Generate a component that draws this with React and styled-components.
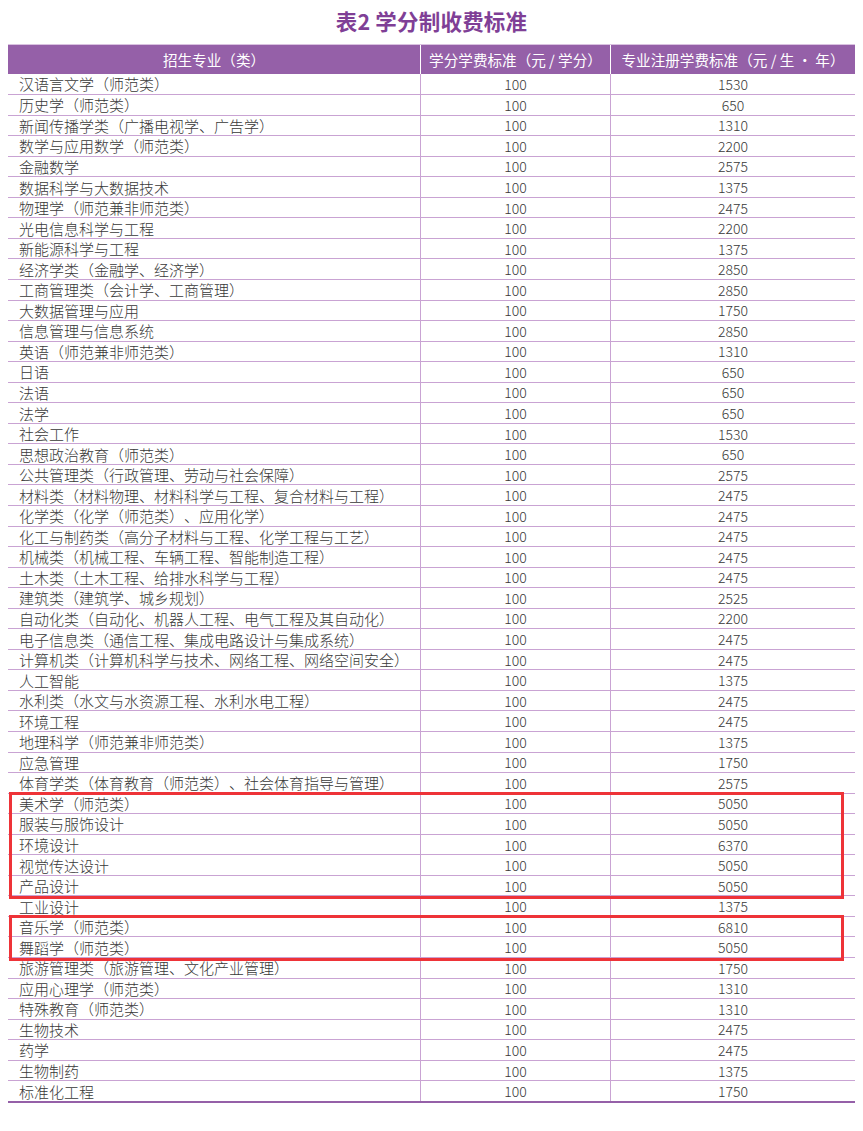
import React from "react";
import styled, { createGlobalStyle } from "styled-components";

const Global = createGlobalStyle`
  html, body { margin: 0; padding: 0; background: #fff; }
  body {
    font-family: "Noto Sans CJK SC", "Noto Sans", sans-serif;
    text-spacing-trim: space-all;
  }
`;

const Page = styled.div`
  width: 863px;
  padding: 6px 8px 0 8px;
  box-sizing: border-box;
`;

const Title = styled.h1`
  margin: 0;
  height: 38px;
  font-size: 21.5px;
  line-height: 30px;
  font-weight: 700;
  color: #7f3f96;
  text-align: center;
  letter-spacing: 0.2px;
`;

const Table = styled.div`
  position: relative;
  width: 847px;
  border-top: 1px solid #d9c2e0;
  border-bottom: 2px solid #9560a8;
`;

const cols = "412px 190px 245px";

const HeadRow = styled.div`
  display: grid;
  grid-template-columns: ${cols};
  height: 28.5px;
  background: #9560a8;
`;

const HeadCell = styled.div`
  display: flex;
  align-items: center;
  justify-content: center;
  color: #fff;
  font-size: 14.6px;
  white-space: nowrap;
  border-left: ${(p) => (p.$first ? "none" : "1px solid #fff")};
`;

const Row = styled.div`
  display: grid;
  grid-template-columns: ${cols};
  height: 20.56px;
  box-sizing: border-box;
  border-top: ${(p) => (p.$first ? "none" : "1px solid #c9a3d3")};
`;

const Cell = styled.div`
  display: flex;
  align-items: center;
  justify-content: ${(p) => (p.$left ? "flex-start" : "center")};
  padding-left: ${(p) => (p.$left ? "11px" : "0")};
  font-size: ${(p) => (p.$left ? "15px" : "14px")};
  font-weight: 300;
  color: #383838;
  line-height: 1;
  white-space: nowrap;
  border-left: ${(p) => (p.$left ? "none" : "1px solid #c9a3d3")};
`;

const Highlight = styled.div`
  position: absolute;
  left: 1px;
  box-sizing: border-box;
  border: 3px solid #ee3338;
  pointer-events: none;
`;

const data = [
  ["汉语言文学（师范类）", 1530],
  ["历史学（师范类）", 650],
  ["新闻传播学类（广播电视学、广告学）", 1310],
  ["数学与应用数学（师范类）", 2200],
  ["金融数学", 2575],
  ["数据科学与大数据技术", 1375],
  ["物理学（师范兼非师范类）", 2475],
  ["光电信息科学与工程", 2200],
  ["新能源科学与工程", 1375],
  ["经济学类（金融学、经济学）", 2850],
  ["工商管理类（会计学、工商管理）", 2850],
  ["大数据管理与应用", 1750],
  ["信息管理与信息系统", 2850],
  ["英语（师范兼非师范类）", 1310],
  ["日语", 650],
  ["法语", 650],
  ["法学", 650],
  ["社会工作", 1530],
  ["思想政治教育（师范类）", 650],
  ["公共管理类（行政管理、劳动与社会保障）", 2575],
  ["材料类（材料物理、材料科学与工程、复合材料与工程）", 2475],
  ["化学类（化学（师范类）、应用化学）", 2475],
  ["化工与制药类（高分子材料与工程、化学工程与工艺）", 2475],
  ["机械类（机械工程、车辆工程、智能制造工程）", 2475],
  ["土木类（土木工程、给排水科学与工程）", 2475],
  ["建筑类（建筑学、城乡规划）", 2525],
  ["自动化类（自动化、机器人工程、电气工程及其自动化）", 2200],
  ["电子信息类（通信工程、集成电路设计与集成系统）", 2475],
  ["计算机类（计算机科学与技术、网络工程、网络空间安全）", 2475],
  ["人工智能", 1375],
  ["水利类（水文与水资源工程、水利水电工程）", 2475],
  ["环境工程", 2475],
  ["地理科学（师范兼非师范类）", 1375],
  ["应急管理", 1750],
  ["体育学类（体育教育（师范类）、社会体育指导与管理）", 2575],
  ["美术学（师范类）", 5050],
  ["服装与服饰设计", 5050],
  ["环境设计", 6370],
  ["视觉传达设计", 5050],
  ["产品设计", 5050],
  ["工业设计", 1375],
  ["音乐学（师范类）", 6810],
  ["舞蹈学（师范类）", 5050],
  ["旅游管理类（旅游管理、文化产业管理）", 1750],
  ["应用心理学（师范类）", 1310],
  ["特殊教育（师范类）", 1310],
  ["生物技术", 2475],
  ["药学", 2475],
  ["生物制药", 1375],
  ["标准化工程", 1750],
];

const HEAD_H = 29.5;
const ROW_H = 20.56;

const boxes = [
  { start: 35, count: 5, width: 835 },
  { start: 41, count: 2, width: 835 },
];

export default function App() {
  return (
    <>
      <Global />
      <Page>
        <Title>表2 学分制收费标准</Title>
        <Table>
          <HeadRow>
            <HeadCell $first>招生专业（类）</HeadCell>
            <HeadCell>学分学费标准（元 / 学分）</HeadCell>
            <HeadCell>专业注册学费标准（元 / 生 • 年）</HeadCell>
          </HeadRow>
          {data.map(([name, fee], i) => (
            <Row key={name} $first={i === 0}>
              <Cell $left>{name}</Cell>
              <Cell>100</Cell>
              <Cell>{fee}</Cell>
            </Row>
          ))}
          {boxes.map((b) => (
            <Highlight
              key={b.start}
              style={{
                top: HEAD_H + b.start * ROW_H - 2,
                height: b.count * ROW_H + 4,
                width: b.width,
              }}
            />
          ))}
        </Table>
      </Page>
    </>
  );
}
